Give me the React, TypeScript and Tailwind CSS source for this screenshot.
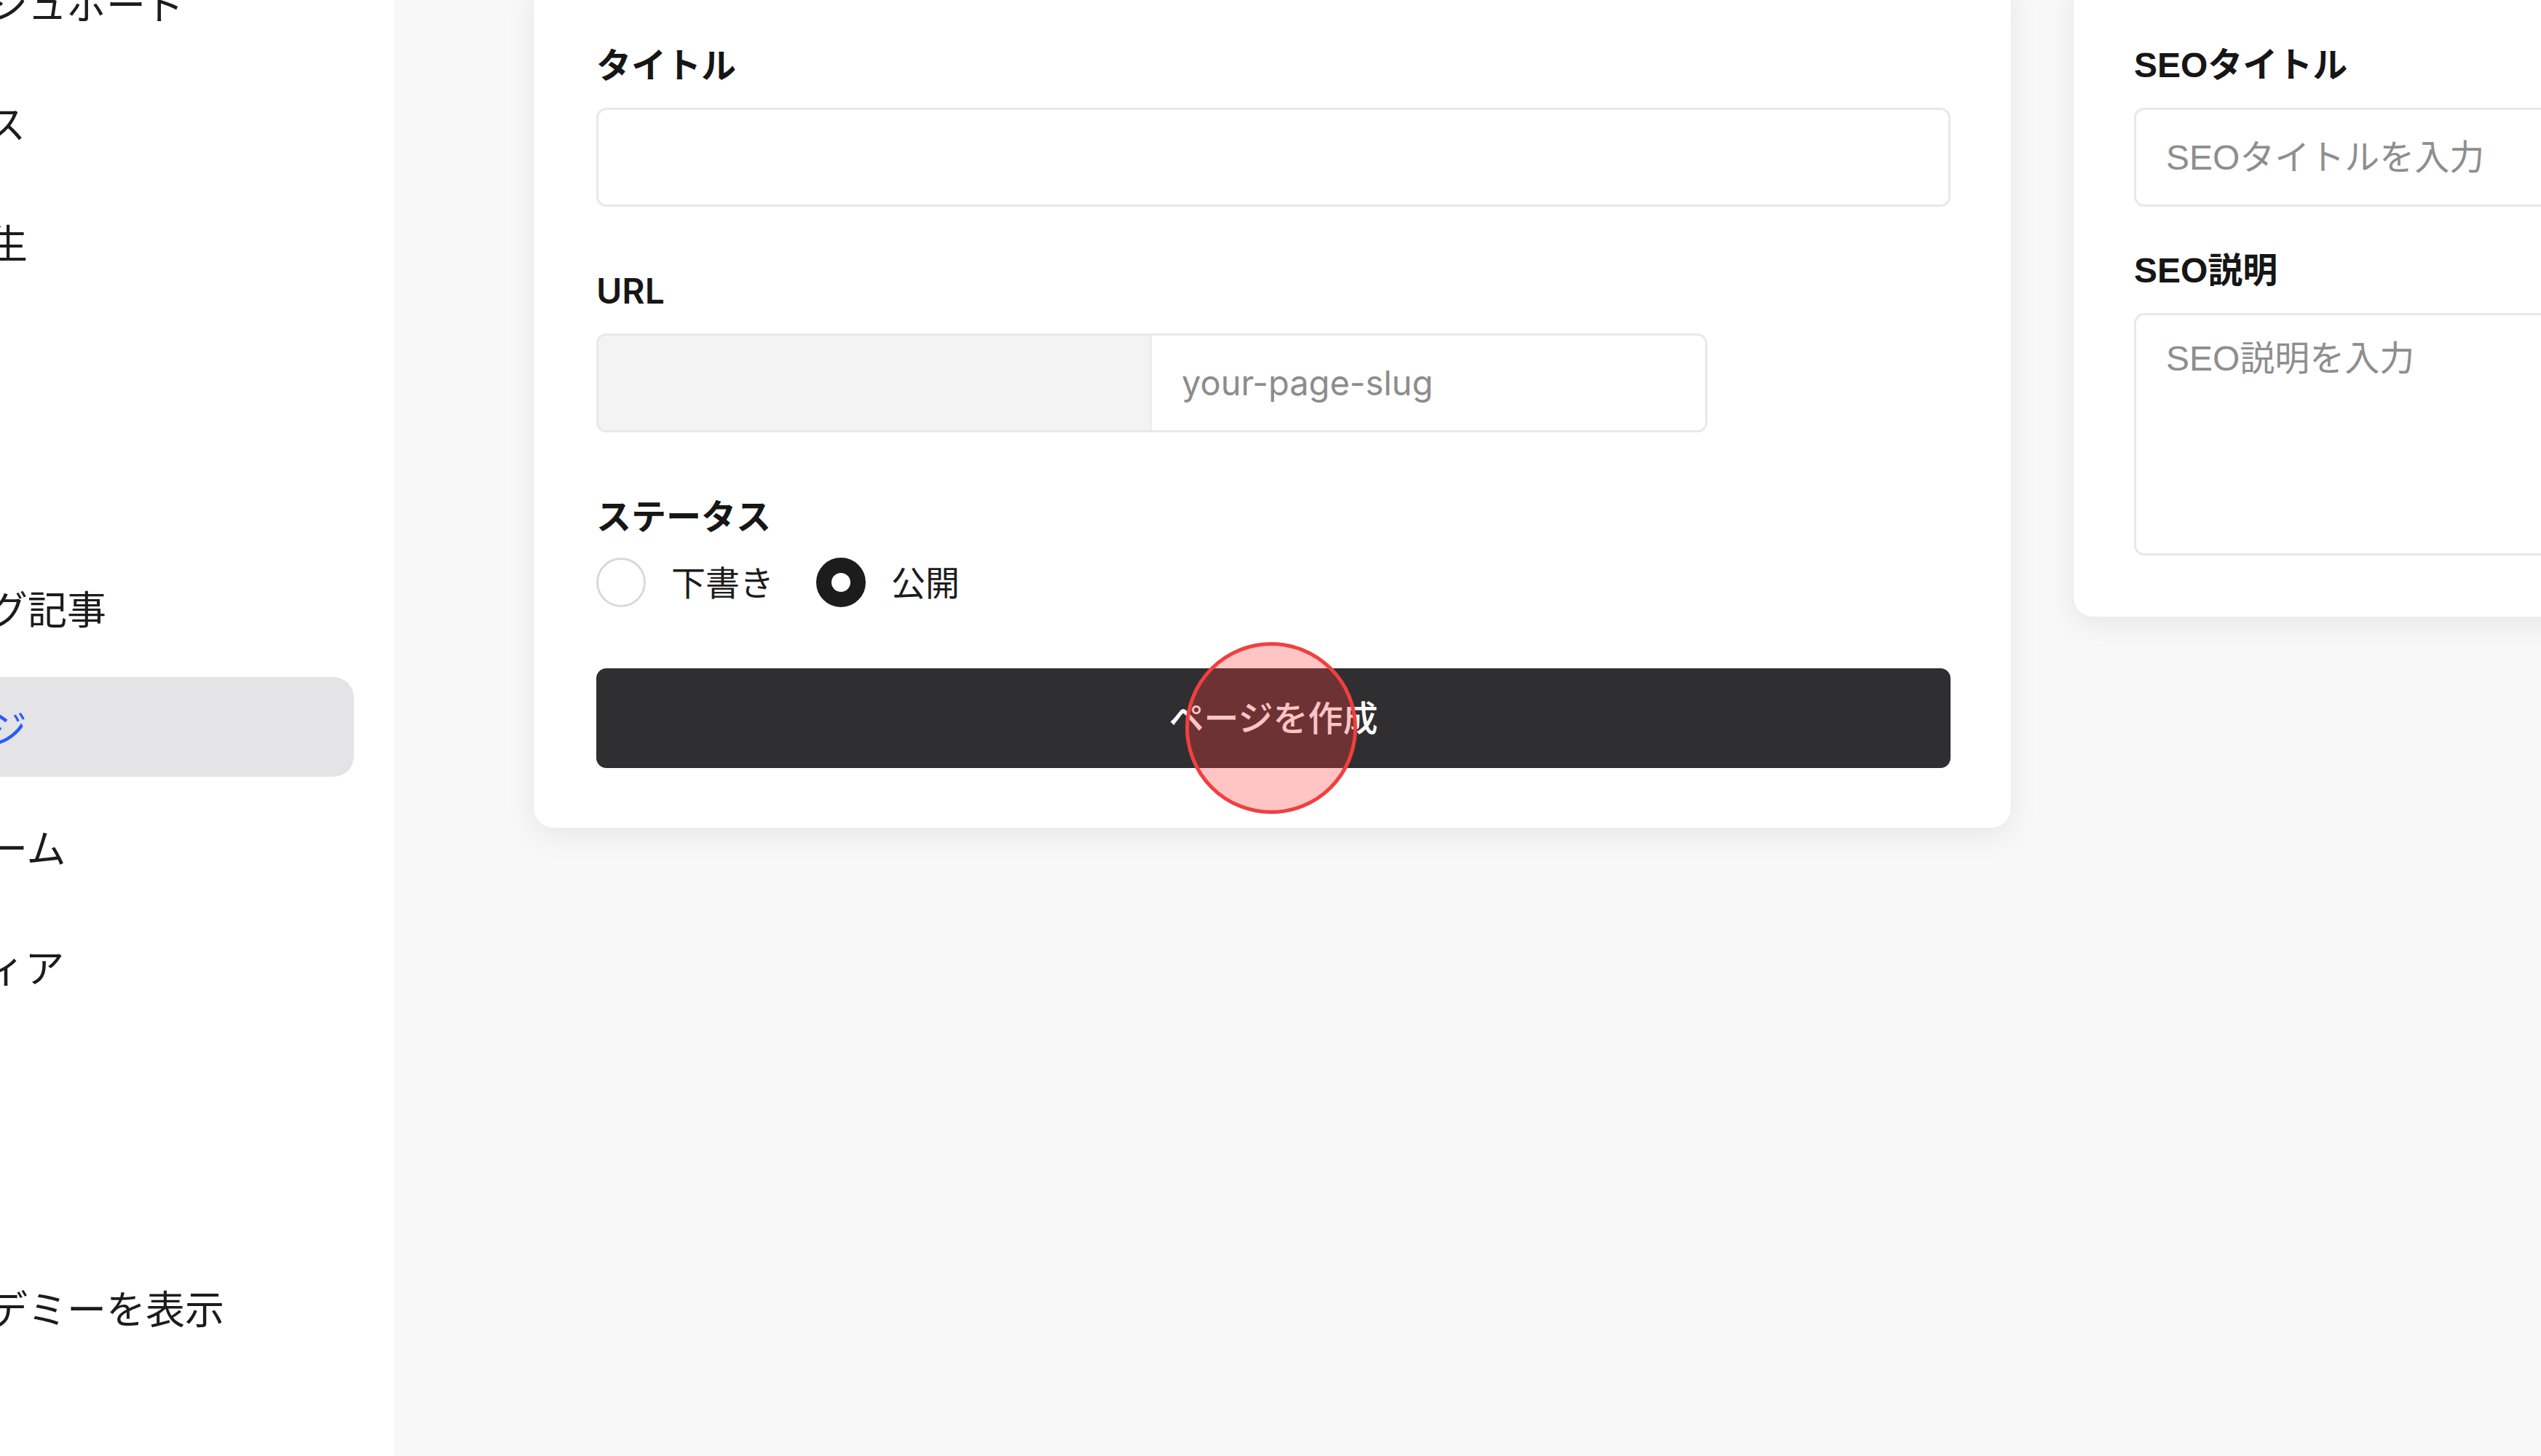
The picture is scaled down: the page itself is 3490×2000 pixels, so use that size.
import React from 'react';

type NavItem = { label: string; active?: boolean };

const GROUP_TOP: NavItem[] = [{ label: 'ダッシュボード' }, { label: 'コース' }, { label: '受講生' }];
const GROUP_CONTENT: NavItem[] = [
  { label: 'ブログ記事' },
  { label: 'ページ', active: true },
  { label: 'フォーム' },
  { label: 'メディア' },
];

const NavLink: React.FC<{ item: NavItem }> = ({ item }) => (
  <div
    className={
      'h-[137px] shrink-0 flex items-center pl-[56px] rounded-[28px] text-[54px] leading-none whitespace-nowrap ' +
      (item.active ? 'bg-[#e4e4e7] text-[#2b5cf6]' : 'text-[#1c1c1c]')
    }
  >
    {item.label}
  </div>
);

const Sidebar: React.FC = () => (
  <aside className="w-[541px] shrink-0 h-full bg-white overflow-hidden font-['Noto_Sans_CJK_JP',sans-serif]">
    <nav className="flex flex-col ml-[-180px] mr-[55px] mt-[-65px]">
      <div className="flex flex-col gap-[27px]">
        {GROUP_TOP.map(i => <NavLink key={i.label} item={i} />)}
      </div>
      <div className="h-[366px] shrink-0" />
      <div className="flex flex-col gap-[27px]">
        {GROUP_CONTENT.map(i => <NavLink key={i.label} item={i} />)}
      </div>
      <div className="h-[332px] shrink-0" />
      <NavLink item={{ label: 'アカデミーを表示' }} />
    </nav>
  </aside>
);

const Radio: React.FC<{ checked?: boolean; label: string }> = ({ checked, label }) => (
  <label className="flex items-center gap-[35px]">
    {checked ? (
      <span className="w-[68px] h-[68px] rounded-full border-[21px] border-[#1c1c1c] bg-white" />
    ) : (
      <span className="w-[68px] h-[68px] rounded-full border-[3px] border-[#d9d9d9] bg-white" />
    )}
    <span className="text-[47px] leading-none text-[#1c1c1c]">{label}</span>
  </label>
);

const PageForm: React.FC = () => (
  <div className="w-[2031px] shrink-0 bg-white rounded-[28px] border border-[#ececec] shadow-[0_10px_40px_rgba(0,0,0,0.07)] pl-[86px] pr-[83px] pt-[86px] pb-[82px] font-['Inter','Noto_Sans_CJK_JP',sans-serif]">
    <div className="flex flex-col gap-[84px]">
      <div className="flex flex-col gap-[26px]">
        <div className="h-[64px] leading-[64px] text-[48px] font-semibold text-[#161616]">タイトル</div>
        <input
          className="h-[136px] w-full rounded-[14px] border-[3px] border-[#e8e8e8] bg-white px-[44px] text-[48px] outline-none"
          defaultValue=""
        />
      </div>

      <div className="flex flex-col gap-[26px]">
        <div className="h-[64px] leading-[64px] text-[48px] font-semibold text-[#161616]">URL</div>
        <div className="flex h-[136px] w-[1526px] rounded-[14px] border-[3px] border-[#e8e8e8] overflow-hidden">
          <div className="w-[757px] shrink-0 bg-[#f3f3f3]" />
          <input
            className="flex-1 min-w-0 border-l-[3px] border-[#ececec] bg-white px-[41px] text-[47px] text-[#1c1c1c] placeholder:text-[#8c8c8c] outline-none"
            placeholder="your-page-slug"
          />
        </div>
      </div>

      <div className="flex flex-col gap-[24px]">
        <div className="h-[64px] leading-[64px] text-[48px] font-semibold text-[#161616]">ステータス</div>
        <div className="flex items-center h-[68px] gap-[58px]">
          <Radio label="下書き" />
          <Radio label="公開" checked />
        </div>
      </div>

      <button className="h-[137px] w-full rounded-[14px] bg-[#2f2f31] text-white text-[48px] font-medium">
        ページを作成
      </button>
    </div>
  </div>
);

const SeoCard: React.FC = () => (
  <div className="w-[1100px] shrink-0 bg-white rounded-[28px] border border-[#ececec] shadow-[0_10px_40px_rgba(0,0,0,0.07)] pl-[83px] pr-[83px] pt-[86px] pb-[84px] font-['Liberation_Sans','Noto_Sans_CJK_JP',sans-serif]">
    <div className="flex flex-col gap-[56px]">
      <div className="flex flex-col gap-[26px]">
        <div className="h-[64px] leading-[64px] text-[48px] font-bold text-[#161616]">SEOタイトル</div>
        <input
          className="h-[136px] w-full rounded-[14px] border-[3px] border-[#e8e8e8] bg-white px-[41px] text-[48px] placeholder:text-[#8e8e8e] outline-none"
          placeholder="SEOタイトルを入力"
        />
      </div>
      <div className="flex flex-col gap-[26px]">
        <div className="h-[64px] leading-[64px] text-[48px] font-bold text-[#161616]">SEO説明</div>
        <textarea
          className="h-[333px] w-full resize-none rounded-[14px] border-[3px] border-[#e8e8e8] bg-white px-[41px] pt-[28px] leading-[64px] text-[48px] placeholder:text-[#8e8e8e] outline-none"
          placeholder="SEO説明を入力"
        />
      </div>
    </div>
  </div>
);

export default function App() {
  return (
    <div className="relative flex w-[3490px] h-[2000px] overflow-hidden bg-[#f8f8f8]">
      <Sidebar />
      <main className="flex-1 min-w-0 pl-[191px]">
        <div className="flex items-start gap-[84px] mt-[-29px]">
          <PageForm />
          <SeoCard />
        </div>
      </main>

      {/* click indicator */}
      <div className="absolute left-[1628px] top-[882px] w-[236px] h-[236px] rounded-full border-[5px] border-[#f04040] bg-[rgba(255,60,60,0.3)] pointer-events-none" />
    </div>
  );
}
